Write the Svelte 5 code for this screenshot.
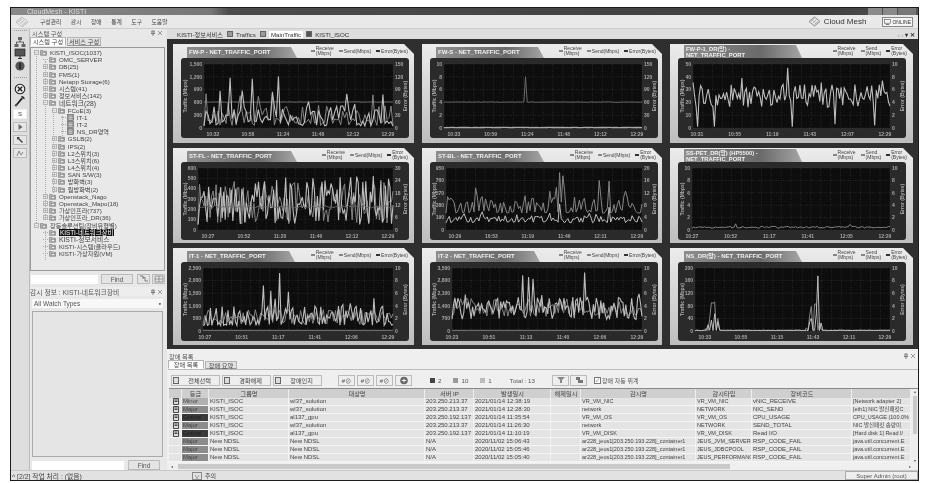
<script>
	// deterministic pseudo random so every render draws the same traces
	function rng(seed) {
		let s = seed;
		return () => {
			s = (s * 16807) % 2147483647;
			return (s - 1) / 2147483646;
		};
	}

	function noisy(seed, n, lo, hi, spike = 0, top = hi, power = 1.6) {
		const r = rng(seed);
		const out = [];
		for (let i = 0; i < n; i++) {
			let v = lo + (hi - lo) * Math.pow(r(), power);
			if (r() < spike) v = hi + (top - hi) * r();
			out.push(v);
		}
		return out;
	}

	function flat(seed, n, v, wobble) {
		const r = rng(seed);
		return Array.from({ length: n }, () => v + (r() - 0.5) * wobble);
	}

	function withPeaks(values, peaks) {
		const out = [...values];
		for (const [pos, v] of peaks) out[Math.round(pos * (out.length - 1))] = v;
		return out;
	}

	const LIGHT = '#bdbdbd';
	const MID = '#858585';
	const DARK = '#6a6a6a';

	const panels = [
		{
			title: ['FW-P - NET_TRAFFIC_PORT'], tabW: 110, left: 23, h: 80, xPad: 9,
			legend: [['Receive', '(Mbps)', MID], ['Send(Mbps)', '', MID], ['Error(Bytes)', '', '#333']],
			yl: ['1,500', '1,200', '900', '600', '300', '0'], yr: ['150', '120', '90', '60', '30', '0'], ylabel: 'Traffic (Mbps)', ymax: 1500,
			x: ['10:32', '10:58', '11:24', '11:48', '12:12', '12:29'],
			series: [
				{ c: DARK, w: 1, v: flat(3, 60, 610, 10) },
				{ c: MID, w: 1, v: noisy(11, 95, 60, 520, 0.06, 850) },
				{ c: LIGHT, w: 1.1, v: withPeaks(noisy(5, 95, 50, 560, 0.05, 900), [[0.14, 1180], [0.25, 1150], [0.39, 1210], [0.2, 880], [0.36, 850]]) }
			]
		},
		{
			title: ['FW-S - NET_TRAFFIC_PORT'], tabW: 108, left: 14, h: 80, xPad: 10,
			legend: [['Receive', '(Mbps)', MID], ['Send(Mbps)', '', MID], ['Error(Bytes)', '', '#333']],
			yl: ['10', '8', '6', '4', '2', '0'], yr: ['150', '120', '90', '60', '30', '0'], ylabel: 'Traffic (Mbps)', ymax: 10,
			x: ['10:33', '10:59', '11:24', '11:48', '12:12', '12:29'],
			series: [
				{ c: DARK, w: 1, v: withPeaks(flat(7, 120, 4.05, 0.08), [[0.41, 8]]) },
				{ c: '#a8a8a8', w: 1.4, v: flat(9, 120, 0.08, 0.04) }
			]
		},
		{
			title: ['FW-P-1_DR(망) -', 'NET_TRAFFIC_PORT'], tabW: 118, left: 15, h: 80, xPad: 4,
			legend: [['Receive', '(Mbps)', MID], ['Send', '(Mbps)', MID], ['Error', '(Bytes)', '#333']],
			yl: ['50', '40', '30', '20', '10', '0'], yr: ['10', '8', '6', '4', '2', '0'], ylabel: 'Traffic (Mbps)', ymax: 50,
			x: ['10:31', '10:55', '11:19', '11:43', '12:07', '12:29'],
			series: [
				{ c: LIGHT, w: 1.1, v: withPeaks(noisy(23, 130, 16, 34, 0.03, 38, 1), [[0.02, 1], [0.11, 1], [0.25, 2], [0.5, 1], [0.48, 47], [0.25, 39], [0.72, 3], [0.92, 2]]) }
			]
		},
		{
			title: ['ST-FL - NET_TRAFFIC_PORT'], tabW: 110, left: 17, h: 78, xPad: 10,
			legend: [['Receive', '(Mbps)', MID], ['Send(Mbps)', '', MID], ['Error', '(Bytes)', '#333']],
			yl: ['600', '500', '400', '300', '200', '100', '0'], yr: ['30', '24', '18', '12', '6', '0'], ylabel: 'Traffic (Mbps)', ymax: 600,
			x: ['10:27', '10:52', '11:20', '11:46', '12:12', '12:29'],
			series: [
				{ c: MID, w: 1, v: noisy(33, 130, 60, 470, 0, 470, 1) },
				{ c: LIGHT, w: 1.1, v: noisy(35, 130, 50, 480, 0.03, 530, 1.1) },
				{ c: DARK, w: 1, v: flat(31, 110, 225, 25) }
			]
		},
		{
			title: ['ST-BL - NET_TRAFFIC_PORT'], tabW: 108, left: 16, h: 78, xPad: 9,
			legend: [['Receive', '(Mbps)', MID], ['Send(Mbps)', '', MID], ['Error', '(Bytes)', '#333']],
			yl: ['950', '760', '570', '380', '190', '0'], yr: ['20', '16', '12', '8', '4', '0'], ylabel: 'Traffic (Mbps)', ymax: 950,
			x: ['10:29', '10:53', '11:19', '11:46', '12:11', '12:29'],
			series: [
				{ c: MID, w: 1, v: withPeaks(noisy(41, 120, 260, 520, 0.08, 720), [[0.58, 880], [0.6, 830], [0.78, 760], [0.83, 750]]) },
				{ c: LIGHT, w: 1, v: withPeaks(noisy(43, 120, 110, 220, 0.05, 300, 1), [[0.58, 400], [0.83, 350]]) }
			]
		},
		{
			title: ['SS-PET_DR(망) (HP5500) -', 'NET_TRAFFIC_PORT'], tabW: 118, left: 14, h: 78, xPad: 0,
			legend: [['Receive', '(Mbps)', MID], ['Send', '(Mbps)', MID], ['Error', '(Bytes)', '#333']],
			yl: ['10', '8', '6', '4', '2', '0'], yr: ['10', '8', '6', '4', '2', '0'], ylabel: 'Traffic (Mbps)', ymax: 10,
			x: ['10:27', '10:52', '11:17', '11:41', '12:05', '12:29'],
			series: [
				{ c: MID, w: 1, v: withPeaks(noisy(51, 110, 0.3, 0.6, 0, 0.6, 1), [[0.22, 1], [0.8, 0.9]]) }
			]
		},
		{
			title: ['IT-1 - NET_TRAFFIC_PORT'], tabW: 108, left: 22, h: 79, xPad: 2,
			legend: [['Receive', '(Mbps)', MID], ['Send(Mbps)', '', MID], ['Error(Bytes)', '', '#333']],
			yl: ['2,500', '2,000', '1,500', '1,000', '500', '0'], yr: ['10', '8', '6', '4', '2', '0'], ylabel: 'Traffic (Mbps)', ymax: 2500,
			x: ['10:27', '10:51', '11:17', '11:41', '12:06', '12:29'],
			series: [
				{ c: DARK, w: 1.2, v: flat(61, 60, 25, 6) },
				{ c: MID, w: 1, v: noisy(63, 110, 250, 850, 0, 850, 1) },
				{ c: LIGHT, w: 1.1, v: withPeaks(noisy(65, 130, 220, 1000, 0.04, 1300), [[0.32, 1800], [0.4, 2300], [0.36, 1600], [0.45, 1550]]) }
			]
		},
		{
			title: ['IT-2 - NET_TRAFFIC_PORT'], tabW: 104, left: 22, h: 79, xPad: 0,
			legend: [['Receive', '(Mbps)', MID], ['Send(Mbps)', '', MID], ['Error(Bytes)', '', '#333']],
			yl: ['3,500', '2,800', '2,100', '1,400', '700', '0'], yr: ['10', '8', '6', '4', '2', '0'], ylabel: 'Traffic (Mbps)', ymax: 3500,
			x: ['10:23', '10:51', '11:13', '11:40', '12:06', '12:29'],
			series: [
				{ c: DARK, w: 1.2, v: flat(71, 60, 35, 6) },
				{ c: MID, w: 1, v: noisy(73, 110, 800, 1800, 0, 1800, 1) },
				{ c: LIGHT, w: 1.1, v: withPeaks(noisy(75, 130, 650, 1900, 0.05, 2300, 1.1), [[0.37, 3100], [0.4, 3000], [0.7, 3250], [0.43, 2900]]) }
			]
		},
		{
			title: ['NS_DR(망) - NET_TRAFFIC_PORT'], tabW: 118, left: 17, h: 79, xPad: 10,
			legend: [['Receive', '(Mbps)', MID], ['Send', '(Mbps)', MID], ['Error', '(Bytes)', '#333']],
			yl: ['200', '160', '120', '80', '40', '0'], yr: ['10', '8', '6', '4', '2', '0'], ylabel: 'Traffic (Mbps)', ymax: 200,
			x: ['10:33', '10:55', '11:15', '11:43', '12:11', '12:29'],
			series: [
				{ c: MID, w: 1, v: withPeaks(flat(81, 120, 2, 2), [[0.06, 10], [0.075, 40], [0.085, 90], [0.095, 88], [0.105, 92], [0.115, 40], [0.125, 5], [0.57, 10], [0.585, 50], [0.6, 78], [0.61, 85], [0.625, 86], [0.64, 30], [0.65, 5]]) },
				{ c: LIGHT, w: 1, v: withPeaks(flat(83, 120, 2, 1), [[0.07, 20], [0.085, 35], [0.1, 55], [0.115, 30], [0.585, 30], [0.6, 40], [0.625, 55], [0.63, 175], [0.645, 25], [0.66, 3]]) }
			]
		}
	];

	const plotRight = 212;
	const CHART_W = 228;

	function plotBox(p) {
		return { x0: p.left, x1: plotRight, y0: 6, y1: p.h - 10 };
	}
	function pointsFor(p, values) {
		const b = plotBox(p);
		return values
			.map((v, i) => {
				const x = b.x0 + ((b.x1 - b.x0) * i) / (values.length - 1);
				const y = b.y1 - ((b.y1 - b.y0) * v) / p.ymax;
				return x.toFixed(1) + ',' + y.toFixed(1);
			})
			.join(' ');
	}
	function tickX(p, i) {
		const b = plotBox(p);
		const from = b.x0 + p.xPad;
		const to = b.x1 - 5;
		return from + ((to - from) * i) / 5;
	}
	function range(n) {
		return Array.from({ length: n }, (_, i) => i);
	}

	const tree = [
		{ l: 0, t: 'KISTI_ISOC(1037)', open: true },
		{ l: 1, t: 'OMC_SERVER', leaf: true },
		{ l: 1, t: 'DB(25)' },
		{ l: 1, t: 'FMS(1)' },
		{ l: 1, t: 'Netapp Storage(6)' },
		{ l: 1, t: '시스템(41)' },
		{ l: 1, t: '정보서비스(142)' },
		{ l: 1, t: '네트워크(28)', open: true, big: true },
		{ l: 2, t: 'FCoE(3)', open: true },
		{ l: 3, t: 'IT-1', leaf: true, dev: true },
		{ l: 3, t: 'IT-2', leaf: true, dev: true },
		{ l: 3, t: 'NS_DR영역', leaf: true, dev: true },
		{ l: 2, t: 'GSLB(2)' },
		{ l: 2, t: 'IPS(2)' },
		{ l: 2, t: 'L2스위치(3)' },
		{ l: 2, t: 'L3스위치(6)' },
		{ l: 2, t: 'L4스위치(4)' },
		{ l: 2, t: 'SAN S/W(3)' },
		{ l: 2, t: '방화벽(3)' },
		{ l: 2, t: '웜방화벽(2)' },
		{ l: 1, t: 'Openstack_Nago' },
		{ l: 1, t: 'Openstack_Mapo(18)' },
		{ l: 1, t: '가상인프라(737)' },
		{ l: 1, t: '가상인프라_DR(36)' },
		{ l: 0, t: '장등솔루션팀(장비유형별)', open: true },
		{ l: 1, t: 'KISTI-네트워크장비', leaf: true, selected: true },
		{ l: 1, t: 'KISTI-정보서비스', leaf: true, big: true },
		{ l: 1, t: 'KISTI-시스템(클라우드)', leaf: true },
		{ l: 1, t: 'KISTI-가상자원(VM)', leaf: true }
	];

	const ROW_H = 7.2;
	const guides = [
		{ x: 5, top: 6, rows: 24 },
		{ x: 14, top: 13, rows: 22 },
		{ x: 22, top: 62, rows: 11.5 },
		{ x: 31, top: 68, rows: 3 },
		{ x: 14, top: 183, rows: 4 }
	];

	const alarms = [
		['Minor', 'KISTI_ISOC', 'wl37_solution', '203.250.213.37', '2021/01/14 12:38:19', 'VR_VM_NIC', 'VR_VM_NIC', 'vNIC_RECEIVE', '[Network adapter 2]', true],
		['Major', 'KISTI_ISOC', 'wl37_solution', '203.250.213.37', '2021/01/14 12:28:30', 'network', 'NETWORK', 'NIC_SEND', '[eth1] NIC 발신패킷C', true],
		['Critical', 'KISTI_ISOC', 'al137_gpu', '203.250.192.137', '2021/01/14 11:35:54', 'VR_VM_OS', 'VR_VM_OS', 'CPU_USAGE', 'CPU_USAGE (100.0%', true],
		['Major', 'KISTI_ISOC', 'wl37_solution', '203.250.213.37', '2021/01/14 11:26:30', 'network', 'NETWORK', 'SEND_TOTAL', 'NIC 발신패킷 송량이', true],
		['Critical', 'KISTI_ISOC', 'al137_gpu', '203.250.192.137', '2021/01/14 11:10:19', 'VR_VM_DISK', 'VR_VM_DISK', 'Read I/O', '[Hard disk 1] Read I/', true],
		['Major', 'New NDSL', 'New NDSL', 'N/A', '2020/11/02 15:06:43', 'ar228_jeus1[203.250.193.228]_container1', 'JEUS_JVM_SERVER', 'RSP_CODE_FAIL', 'java.util.concurrent.E', false],
		['Major', 'New NDSL', 'New NDSL', 'N/A', '2020/11/02 15:05:46', 'ar228_jeus1[203.250.193.228]_container1', 'JEUS_JDBCPOOL', 'RSP_CODE_FAIL', 'java.util.concurrent.E', false],
		['Major', 'New NDSL', 'New NDSL', 'N/A', '2020/11/02 15:05:40', 'ar228_jeus1[203.250.193.228]_container1', 'JEUS_PERFORMANCE', 'RSP_CODE_FAIL', 'java.util.concurrent.E', false]
	];

	const headers = ['', '등급', '그룹명', '대상명', '서버 IP', '발생일시', '해제일시', '감시명', '감시타입', '장비코드', ''];
	const menus = ['구성관리', '감시', '장애', '통계', '도구', '도움말'];
</script>

{#snippet nodeIcon()}
	<svg class="node" viewBox="0 0 7 7">
		<path d="M0.5 1.5h2.5l.6.8h2.9v4h-6z" fill="#b5b5b5" stroke="#777" stroke-width=".6" />
		<rect x="2.4" y="3.4" width="3.4" height="2.2" fill="#efefef" stroke="#777" stroke-width=".5" />
	</svg>
{/snippet}

{#snippet devIcon()}
	<svg class="node" viewBox="0 0 7 7">
		<rect x="0.5" y="0.5" width="6" height="6" fill="#888" stroke="#555" stroke-width=".5" />
		<path d="M1.5 2h4M1.5 3.5h4" stroke="#e4e4e4" stroke-width=".7" />
		<rect x="1.5" y="4.6" width="4" height="1.2" fill="#ccc" />
	</svg>
{/snippet}

{#snippet pinClose()}
	<span class="pin">
		<svg viewBox="0 0 6 6" width="6" height="6"><path d="M1.5 1h3M2 1v2.5M4 1v2.5M1 3.5h4M3 3.5V6" stroke="#555" stroke-width=".7" fill="none" /></svg>
		<svg viewBox="0 0 6 6" width="6" height="6"><path d="M1 1l4 4M5 1l-4 4" stroke="#777" stroke-width=".7" /></svg>
	</span>
{/snippet}

<div class="window">
	<div class="titlebar">
		<span>CloudMesh - KISTI</span>
		<div class="winbtns"><i></i><i></i><i class="close"></i></div>
	</div>

	<div class="menubar">
		<svg class="logo" viewBox="0 0 14 12" width="14" height="12">
			<path d="M7 1l6 5-6 5-6-5z" fill="none" stroke="#bbb" stroke-width="1" />
			<path d="M3 6l4-3.2M5 7.6l4-3.2M7 9.2l4-3.2" stroke="#aaa" stroke-width=".8" />
		</svg>
		{#each menus as m}<span class="menu">{m}</span>{/each}
		<div class="brand">
			<svg viewBox="0 0 14 12" width="13" height="11">
				<path d="M7 1l6 5-6 5-6-5z" fill="none" stroke="#888" stroke-width="1" />
				<path d="M3 6l4-3.2M5 7.6l4-3.2M7 9.2l4-3.2" stroke="#888" stroke-width=".8" />
			</svg>
			<b>Cloud Mesh</b>
		</div>
		<div class="online">
			<svg viewBox="0 0 8 7" width="7" height="6"><rect x=".5" y=".5" width="7" height="4.4" fill="none" stroke="#555" stroke-width=".7" /><path d="M2 6.5h4" stroke="#555" /></svg>
			ONLINE
		</div>
	</div>

	<div class="body">
		<div class="rail">
			<div class="dots"></div>
			<button aria-label="network"><svg viewBox="0 0 12 12"><rect x="4" y="1" width="4" height="3" fill="#666" /><rect x="0.5" y="8" width="4" height="3" fill="#666" /><rect x="7.5" y="8" width="4" height="3" fill="#666" /><path d="M6 4v2M2.5 8V6h7v2" stroke="#444" fill="none" stroke-width=".8" /></svg></button>
			<button aria-label="monitor"><svg viewBox="0 0 12 12"><rect x="1" y="1" width="10" height="7" fill="#555" stroke="#222" stroke-width=".7" /><path d="M4 10.5h4M6 8v2" stroke="#333" /></svg></button>
			<button aria-label="alert"><svg viewBox="0 0 12 12"><circle cx="6" cy="6" r="4.6" fill="#555" /><rect x="5.2" y="2.8" width="1.6" height="6.4" fill="#222" /></svg></button>
			<div class="dots gap"></div>
			<button aria-label="stop"><svg viewBox="0 0 12 12"><circle cx="6" cy="6" r="4.8" fill="#eee" stroke="#222" stroke-width="1.1" /><path d="M3.8 3.8l4.4 4.4M8.2 3.8l-4.4 4.4" stroke="#222" stroke-width="1.5" /></svg></button>
			<button aria-label="tools"><svg viewBox="0 0 12 12"><path d="M2 10.5L8.2 3.2" stroke="#222" stroke-width="1.8" /><path d="M6.8 1.6a2.4 2.4 0 0 1 3.6 3l-1.6-1.2z" fill="#333" /><circle cx="2" cy="10.2" r="1.2" fill="#555" /></svg></button>
			<button class="boxed white" aria-label="s">S</button>
			<button class="boxed" aria-label="play"><svg viewBox="0 0 12 12"><path d="M4.5 3l4 3-4 3z" fill="#666" /></svg></button>
			<button class="boxed" aria-label="zoom"><svg viewBox="0 0 12 12"><path d="M3 3h3l-1 1 4 4-1 1-4-4-1 1z" fill="#444" /></svg></button>
			<button class="boxed" aria-label="chart"><svg viewBox="0 0 12 12"><path d="M3 9l2-5 2 4 2-3" stroke="#888" fill="none" /></svg></button>
		</div>

		<aside class="left">
			<div class="dock-head"><span>시스템 구성</span>{@render pinClose()}</div>
			<div class="tabs">
				<span class="tab active">시스템 구성</span>
				<span class="tab">서비스 구성</span>
			</div>
			<div class="tree">
				{#each guides as g}
					<i class="guide" style="left:{g.x}px;top:{g.top}px;height:{g.rows * ROW_H}px"></i>
				{/each}
				{#each tree as n}
					<div class="tree-row" style="padding-left:{3 + n.l * 8.9}px">
						{#if n.leaf}
							<i class="stub"></i>
						{:else}
							<i class="exp">{n.open ? '−' : '+'}</i>
						{/if}
						{#if n.dev}{@render devIcon()}{:else}{@render nodeIcon()}{/if}
						<span class:selected={n.selected} class:big={n.big}>{n.t}</span>
					</div>
				{/each}
			</div>
			<div class="find">
				<input type="text" />
				<button class="btn wide">Find</button>
				<button class="btn sq" aria-label="expand"><svg viewBox="0 0 10 8" width="10" height="8"><path d="M1 1h3v3M4 2.5h2v3.5h3" stroke="#666" fill="none" stroke-width=".8" /></svg></button>
				<button class="btn sq" aria-label="collapse"><svg viewBox="0 0 10 8" width="10" height="8"><path d="M1 1h8v6H1zM5 1v6M1 4h8" stroke="#888" fill="none" stroke-width=".8" /></svg></button>
			</div>
			<div class="dock-head watch"><span>감시 정보 : KISTI-네트워크장비</span>{@render pinClose()}</div>
			<div class="select"><span>All Watch Types</span><i>▪</i></div>
			<div class="watch-list"></div>
			<div class="find bottom">
				<input type="text" />
				<button class="btn find2">Find</button>
			</div>
		</aside>

		<main>
			<div class="doc-tabs">
				<span class="doc">KISTI-정보서비스</span>
				<i class="doc-ico"></i><span class="doc">Traffics</span>
				<i class="doc-ico"></i><span class="doc current">MainTraffic</span>
				<i class="doc-ico dark"></i><span class="doc">KISTI_ISOC</span>
				<span class="doc-ctrl">‹ › <b>▾ ✕</b></span>
			</div>

			<div class="board">
				{#each panels as p}
					{@const b = plotBox(p)}
					<section class="panel">
						<header>
							<h3 class:two={p.title.length > 1} style="width:{p.tabW}px">
								{#each p.title as line}<span>{line}</span>{/each}
							</h3>
							<ul>
								{#each p.legend as item}
									<li>
										<i style="background:{item[2]}"></i>
										<span>{item[0]}{#if item[1]}<br />{item[1]}{/if}</span>
									</li>
								{/each}
							</ul>
						</header>
						<div class="chart">
							<svg width={CHART_W} height={p.h} viewBox="0 0 {CHART_W} {p.h}">
								<rect x={b.x0} y={b.y0} width={b.x1 - b.x0} height={b.y1 - b.y0} fill="#0d0d0d" />
								{#each range(21) as i}
									<line x1={b.x0 + ((b.x1 - b.x0) * i) / 20} x2={b.x0 + ((b.x1 - b.x0) * i) / 20} y1={b.y0} y2={b.y1} class="grid" />
								{/each}
								{#each range(p.yl.length) as i}
									{@const y = b.y0 + ((b.y1 - b.y0) * i) / (p.yl.length - 1)}
									<line x1={b.x0} x2={b.x1} y1={y} y2={y} class="grid" />
									<text x={b.x0 - 2} y={y + 1.8} text-anchor="end">{p.yl[i]}</text>
								{/each}
								{#each range(p.yr.length) as i}
									<text x={b.x1 + 2} y={b.y0 + ((b.y1 - b.y0) * i) / (p.yr.length - 1) + 1.8}>{p.yr[i]}</text>
								{/each}
								<text transform="translate(6 {(b.y0 + b.y1) / 2}) rotate(-90)" text-anchor="middle">{p.ylabel}</text>
								<text transform="translate(226 {(b.y0 + b.y1) / 2}) rotate(-90)" text-anchor="middle">Error (Bytes)</text>
								{#each p.x as label, i}
									<text x={tickX(p, i)} y={p.h - 2.5} text-anchor="middle">{label}</text>
								{/each}
								{#each p.series as s}
									<polyline points={pointsFor(p, s.v)} fill="none" stroke={s.c} stroke-width={s.w} />
								{/each}
							</svg>
						</div>
					</section>
				{/each}
			</div>

			<div class="alarms">
				<div class="alarm-head"><span>장애 목록</span>{@render pinClose()}</div>
				<div class="tabs alarm-tabs">
					<span class="tab active">장애 목록</span>
					<span class="tab">장애 요약</span>
				</div>
				<div class="tools">
					<button class="tool"><i></i>전체선택</button>
					<button class="tool"><i></i>경화해제</button>
					<button class="tool"><i></i>장애인지</button>
					<span class="mini-group">
						<button class="mini">#⊘</button>
						<button class="mini">#⊘</button>
						<button class="mini">#⊘</button>
						<button class="mini round" aria-label="more"><svg viewBox="0 0 12 9" width="12" height="9"><circle cx="6" cy="4.5" r="3.8" fill="#666" /><path d="M3.8 4.5h4.4M6 2.6v3.8" stroke="#eee" /></svg></button>
					</span>
					<span class="counts">
						<span><i class="sw s1"></i>2</span>
						<span><i class="sw s2"></i>10</span>
						<span><i class="sw s3"></i>1</span>
						<span>Total : 13</span>
					</span>
					<button class="mini filter" aria-label="filter"><svg viewBox="0 0 10 8" width="10" height="8"><path d="M1 1h8L6 4v3H4V4z" fill="#888" /></svg></button>
					<button class="mini filter" aria-label="export"><svg viewBox="0 0 10 8" width="10" height="8"><path d="M2 1h4v3h3v3H4V4H2z" fill="#777" /></svg></button>
					<label class="auto"><i class="check">✓</i>장애 자동 위계</label>
				</div>

				<div class="grid-wrap">
					<div class="table">
						<div class="row head">
							{#each headers as h}<span>{h}</span>{/each}
						</div>
						{#each alarms as a}
							<div class="row">
								<span class="ack">{#if a[9]}<svg viewBox="0 0 6 7" width="6" height="7"><path d="M.5.5h5v6h-5z" fill="#ddd" stroke="#222" stroke-width=".8" /><path d="M1.5 2h3M1.5 3.5h3" stroke="#222" stroke-width=".8" /></svg>{/if}</span>
								<span class="sev {a[0].toLowerCase()}">{a[0]}</span>
								<span>{a[1]}</span>
								<span>{a[2]}</span>
								<span>{a[3]}</span>
								<span>{a[4]}</span>
								<span></span>
								<span class="narrow">{a[5]}</span>
								<span class="narrow">{a[6]}</span>
								<span>{a[7]}</span>
								<span class="narrow">{a[8]}</span>
							</div>
						{/each}
					</div>
					<div class="vscroll"><i>▴</i><b></b><i>▾</i></div>
				</div>
				<div class="hscroll"><i>◂</i><b></b><i>▸</i></div>
			</div>
		</main>
	</div>

	<footer>
		<span class="job">^ [2/2] 작업 처리 : (없음)</span>
		<span class="combo"><i>∨</i>주의</span>
		<span class="user">Super Admin (root)</span>
	</footer>
</div>

<style>
	:global(body) {
		margin: 0;
		background: #fff;
	}

	.window {
		box-sizing: border-box;
		width: 909px;
		height: 474px;
		margin: 7px 0 0 10px;
		border: 1px solid #1c1c1c;
		display: flex;
		flex-direction: column;
		background: #e4e4e4;
		overflow: hidden;
		font-family: 'Liberation Sans', 'Noto Sans CJK KR', sans-serif;
		font-size: 6.5px;
		color: #333;
		filter: blur(0.4px);
	}

	i {
		font-style: normal;
	}

	button {
		font: inherit;
		color: inherit;
		padding: 0;
	}

	/* title + menu */
	.titlebar {
		height: 7px;
		flex: none;
		display: flex;
		align-items: center;
		justify-content: space-between;
		padding-left: 16px;
		background: linear-gradient(90deg, #8a8a8a 0, #777 22%, #4b4b4b 24%, #3f3f3f 90%, #555);
		color: #ddd;
		font-size: 7px;
	}

	.winbtns {
		display: flex;
		gap: 1px;
		margin-right: 2px;
		height: 100%;
	}

	.winbtns i {
		width: 14px;
		background: #8a8a8a;
	}

	.winbtns .close {
		width: 18px;
		background: #777;
	}

	.menubar {
		height: 13px;
		flex: none;
		display: flex;
		align-items: center;
		background: #e9e9e9;
		border-bottom: 1px solid #ccc;
		font-size: 5.8px;
	}

	.logo {
		margin: 0 11px 0 4px;
	}

	.menu {
		margin-right: 9.5px;
		color: #444;
	}

	.brand {
		margin-left: auto;
		display: flex;
		align-items: center;
		gap: 3px;
		font-size: 8px;
		color: #333;
	}

	.brand b {
		font-weight: 400;
	}

	.online {
		display: flex;
		align-items: center;
		gap: 1px;
		margin: 0 5px 0 16px;
		padding: 0 1px;
		height: 8px;
		border: 1px solid #888;
		background: #f5f5f5;
		font-size: 5px;
	}

	.body {
		flex: 1;
		min-height: 0;
		display: flex;
	}

	/* left rail */
	.rail {
		width: 19px;
		flex: none;
		display: flex;
		flex-direction: column;
		align-items: center;
		gap: 1px;
		padding-top: 1px;
		background: #dedede;
		box-sizing: border-box;
		border-right: 1px solid #bbb;
	}

	.rail button {
		width: 14px;
		height: 11px;
		border: 0;
		background: none;
		display: flex;
		align-items: center;
		justify-content: center;
	}

	.rail svg {
		width: 12px;
		height: 12px;
		flex: none;
	}

	.rail .boxed {
		border: 1px solid #bbb;
		background: #e6e6e6;
		margin-top: 2px;
		height: 10px;
	}

	.rail .white {
		background: #fff;
		border-color: #eee;
		font-size: 6px;
	}

	.dots {
		width: 13px;
		height: 4px;
		border-top: 1px dotted #999;
	}

	.dots.gap {
		margin-top: 5px;
	}

	/* left column */
	.left {
		width: 137px;
		flex: none;
		display: flex;
		flex-direction: column;
		background: #e8e8e8;
		box-sizing: border-box;
		padding-right: 2px;
	}

	.dock-head {
		height: 8px;
		flex: none;
		display: flex;
		align-items: center;
		justify-content: space-between;
		padding: 0 2px;
		font-size: 6.2px;
		color: #555;
		white-space: nowrap;
	}

	.pin {
		display: flex;
		gap: 1px;
	}

	.tabs {
		display: flex;
		height: 9px;
		flex: none;
		padding-left: 0;
		border-bottom: 0;
	}

	.tab {
		width: 34px;
		flex: none;
		display: flex;
		align-items: center;
		justify-content: center;
		white-space: nowrap;
		background: #e2e2e2;
		border: 1px solid #b5b5b5;
		border-bottom: 1px solid #999;
		box-sizing: border-box;
		color: #444;
		font-size: 6.2px;
	}

	.tab.active {
		background: #fff;
		width: 36px;
		margin-right: 1px;
		border-bottom-color: #fff;
	}

	.tree {
		position: relative;
		height: 224px;
		flex: none;
		box-sizing: border-box;
		border: 1px solid #9a9a9a;
		background: #e9e9e9;
		padding-top: 1px;
		margin-top: 1px;
	}

	.guide {
		position: absolute;
		width: 0;
		border-left: 1px dotted #aaa;
	}

	.tree-row {
		position: relative;
		height: 7.2px;
		display: flex;
		align-items: center;
		white-space: nowrap;
		font-size: 6.2px;
		color: #444;
	}

	.exp {
		width: 5px;
		height: 5px;
		box-sizing: border-box;
		border: 1px solid #b5b5b5;
		background: #eee;
		margin-right: 1px;
		flex: none;
		font-size: 5px;
		line-height: 3px;
		text-align: center;
		color: #777;
	}

	.stub {
		width: 5px;
		margin-right: 1px;
		flex: none;
		border-top: 1px dotted #aaa;
	}

	.node {
		width: 7px;
		height: 7px;
		flex: none;
		margin-right: 3px;
	}

	.tree-row .big {
		font-size: 6.8px;
	}

	.tree-row .selected {
		background: #111;
		color: #fff;
		padding: 0 1px;
		font-size: 6.4px;
		line-height: 7px;
	}

	.find {
		display: flex;
		align-items: center;
		gap: 2px;
		height: 10px;
		margin-top: 3px;
		flex: none;
		padding-left: 1px;
	}

	.find input {
		width: 67px;
		height: 9px;
		box-sizing: border-box;
		border: 0;
		background: #fff;
		margin-right: 1px;
	}

	.btn {
		height: 10px;
		box-sizing: border-box;
		border: 1px solid #bbb;
		background: #e4e4e4;
		display: flex;
		align-items: center;
		justify-content: center;
		color: #555;
	}

	.btn.wide {
		width: 32px;
		margin-right: 2px;
	}

	.btn.sq {
		width: 13px;
	}

	.dock-head.watch {
		margin-top: 3px;
		height: 9px;
		background: #ededed;
		font-size: 6.8px;
		padding-left: 0;
	}

	.select {
		margin: 3px 2px 0;
		height: 9px;
		flex: none;
		display: flex;
		justify-content: space-between;
		align-items: center;
		padding: 0 2px;
		background: #f8f8f8;
		color: #555;
	}

	.watch-list {
		margin: 3px 2px 0;
		height: 146px;
		flex: none;
		box-sizing: border-box;
		border: 1px solid #aaa;
		background: #e5e5e5;
	}

	.find.bottom {
		margin-top: 3px;
		padding-left: 2px;
	}

	.find.bottom input {
		width: 92px;
		margin-right: 2px;
	}

	.btn.find2 {
		width: 32px;
	}

	/* main column */
	main {
		flex: 1;
		min-width: 0;
		display: flex;
		flex-direction: column;
	}

	.doc-tabs {
		height: 10px;
		flex: none;
		display: flex;
		align-items: center;
		padding-left: 10px;
		background: #dedede;
		font-size: 6.2px;
		color: #333;
	}

	.doc {
		margin-right: 4px;
		white-space: nowrap;
	}

	.doc.current {
		background: #fff;
		padding: 0 2px;
		margin-right: 3px;
	}

	.doc-ico {
		width: 6px;
		height: 6px;
		margin-right: 3px;
		background: #999;
		border: 1px solid #666;
		box-sizing: border-box;
	}

	.doc-ico.dark {
		background: #555;
	}

	.doc-ctrl {
		margin-left: auto;
		margin-right: 3px;
		color: #999;
	}

	.doc-ctrl b {
		color: #333;
	}

	.board {
		height: 310px;
		flex: none;
		box-sizing: border-box;
		padding: 5px 0 0 6px;
		background: #2f2f2f;
		display: grid;
		grid-template-columns: 241px 240px 243px;
		grid-template-rows: 99px 95px 97px;
		column-gap: 8px;
		row-gap: 5px;
	}

	.panel {
		display: flex;
		flex-direction: column;
		background: linear-gradient(#ececec, #bdbdbd);
		clip-path: polygon(0 0, calc(100% - 10px) 0, 100% 10px, 100% 100%, 0 100%);
		min-height: 0;
	}

	.panel header {
		height: 14px;
		flex: none;
		display: flex;
		padding-left: 14px;
	}

	.panel h3 {
		margin: 3px 0 0;
		height: 11px;
		box-sizing: border-box;
		padding: 0 0 0 2px;
		display: flex;
		flex-direction: column;
		justify-content: center;
		background: linear-gradient(90deg, #8d8d8d, #6a6a6a 65%, #a5a5a5);
		clip-path: polygon(0 0, calc(100% - 6px) 0, 100% 100%, 0 100%);
		color: #f0f0f0;
		font-size: 6px;
		line-height: 5.5px;
		font-weight: 700;
		white-space: nowrap;
		flex: none;
		overflow: hidden;
	}

	.panel h3.two {
		margin-top: 1px;
		height: 13px;
		font-size: 5.8px;
		line-height: 6px;
	}

	.panel ul {
		list-style: none;
		margin: 2px 6px 0 0;
		padding: 0;
		flex: 1;
		display: flex;
		justify-content: flex-end;
		gap: 5px;
	}

	.panel li {
		display: flex;
		align-items: center;
		gap: 1px;
		font-size: 5px;
		line-height: 5px;
		color: #444;
		white-space: nowrap;
		height: 10px;
	}

	.panel li i {
		width: 4px;
		height: 1.5px;
	}

	.chart {
		margin: 0 auto 0 8px;
		width: 228px;
		border-radius: 3px;
		background: #2a2a2a;
		overflow: hidden;
		flex: none;
	}

	.chart svg {
		display: block;
	}

	.chart text {
		font-size: 5px;
		font-weight: 700;
		fill: #a8a8a8;
	}

	.chart .grid {
		stroke: #4a4a4a;
		stroke-width: 0.5;
		stroke-dasharray: 0.8 1.6;
	}

	/* alarm list */
	.alarms {
		flex: 1;
		min-height: 0;
		display: flex;
		flex-direction: column;
		background: #efefef;
		padding-left: 2px;
	}

	.alarm-head {
		height: 10px;
		flex: none;
		display: flex;
		align-items: center;
		justify-content: space-between;
		padding: 2px 2px 0 0;
		box-sizing: border-box;
		color: #555;
		font-size: 6.2px;
		margin-top: 1px;
	}

	.alarm-tabs {
		height: 8px;
		border-bottom: 1px solid #bbb;
		margin-left: -1px;
		padding-top: 1px;
	}

	.alarm-tabs .tab {
		width: 32px;
	}

	.alarm-tabs .tab.active {
		width: 36px;
		margin-top: -1px;
	}

	.tools {
		height: 12px;
		flex: none;
		margin-top: 4px;
		display: flex;
		align-items: center;
		padding-left: 2px;
		font-size: 6.2px;
	}

	.tool {
		width: 49px;
		height: 11px;
		margin-right: 2px;
		display: flex;
		align-items: center;
		justify-content: space-between;
		padding: 0 8px 0 1px;
		box-sizing: border-box;
		border: 1px solid #bbb;
		background: #eee;
		color: #444;
	}

	.tool i {
		width: 6px;
		height: 7px;
		border: 1px solid #666;
		box-sizing: border-box;
		background: #ddd;
	}

	.mini-group {
		display: flex;
		gap: 2px;
		margin-left: 14px;
	}

	.mini {
		width: 17px;
		height: 11px;
		box-sizing: border-box;
		border: 1px solid #bbb;
		background: #eee;
		font-size: 6px;
		color: #555;
		display: flex;
		align-items: center;
		justify-content: center;
	}

	.counts {
		display: flex;
		margin-left: 18px;
		gap: 12px;
		width: 122px;
		color: #555;
		white-space: nowrap;
	}

	.counts span {
		display: flex;
		align-items: center;
		gap: 3px;
	}

	.counts span:last-child {
		margin-left: 6px;
	}

	.sw {
		width: 5px;
		height: 5px;
	}

	.s1 {
		background: #444;
	}

	.s2 {
		background: #999;
	}

	.s3 {
		background: #bbb;
	}

	.filter {
		margin-right: 1px;
	}

	.auto {
		margin-left: 6px;
		display: flex;
		align-items: center;
		gap: 1px;
		color: #555;
		font-size: 6px;
	}

	.check {
		width: 5px;
		height: 5px;
		border: 1px solid #777;
		background: #fff;
		font-size: 5px;
		line-height: 5px;
		text-align: center;
	}

	.grid-wrap {
		display: flex;
		margin-top: 2px;
		height: 74px;
		flex: none;
		border-top: 1px solid #888;
	}

	.table {
		width: 742px;
		flex: none;
		overflow: hidden;
		background: #f1f1f1;
	}

	.row {
		display: grid;
		grid-template-columns: 13px 27px 80px 136px 49px 77px 30px 115px 56px 100px 59px;
		height: 8px;
		line-height: 7.5px;
		font-size: 6px;
		color: #444;
		background: #e4e4e4;
		border-bottom: 1px solid #f4f4f4;
		box-sizing: border-box;
	}

	.row span {
		overflow: hidden;
		white-space: nowrap;
		padding-left: 1px;
		border-right: 1px solid #f2f2f2;
		min-width: 0;
	}

	.row .narrow {
		font-size: 5.5px;
	}

	.row.head {
		height: 9px;
		line-height: 9px;
		background: #cfcfcf;
		border-bottom: 0;
		font-size: 6.2px;
	}

	.row.head span {
		text-align: center;
		color: #444;
		border-right: 1px solid #eee;
	}

	.ack {
		display: flex;
		align-items: center;
		justify-content: center;
	}

	.sev.minor {
		background: #b0b0b0;
	}

	.sev.major {
		background: #8c8c8c;
	}

	.sev.critical {
		background: #3a3a3a;
		color: #222;
	}

	.vscroll {
		flex: 1;
		display: flex;
		flex-direction: column;
		align-items: center;
		font-size: 4px;
		background: #ededed;
		color: #555;
	}

	.vscroll b {
		width: 4px;
		height: 38px;
		margin: 2px 0 auto;
		background: #c9c9c9;
	}

	.hscroll {
		height: 7px;
		flex: none;
		width: 742px;
		display: flex;
		align-items: center;
		font-size: 4px;
		padding-left: 2px;
		box-sizing: border-box;
		color: #555;
	}

	.hscroll b {
		width: 552px;
		height: 5px;
		margin: 0 auto 0 5px;
		background: #cacaca;
	}

	footer {
		height: 10px;
		flex: none;
		display: flex;
		align-items: center;
		background: #e2e2e2;
		border-top: 1px solid #c8c8c8;
		font-size: 6.8px;
		color: #444;
		box-sizing: border-box;
	}

	.job {
		width: 180px;
		padding-left: 1px;
	}

	.combo {
		display: flex;
		align-items: center;
		gap: 3px;
		font-size: 6px;
	}

	.combo i {
		width: 8px;
		height: 6px;
		border: 1px solid #888;
		text-align: center;
		line-height: 6px;
		font-size: 5px;
	}

	.user {
		margin-left: auto;
		width: 73px;
		height: 9px;
		box-sizing: border-box;
		border: 1px solid #aaa;
		background: #eee;
		text-align: center;
		line-height: 8px;
		font-size: 6px;
		color: #555;
	}
</style>
